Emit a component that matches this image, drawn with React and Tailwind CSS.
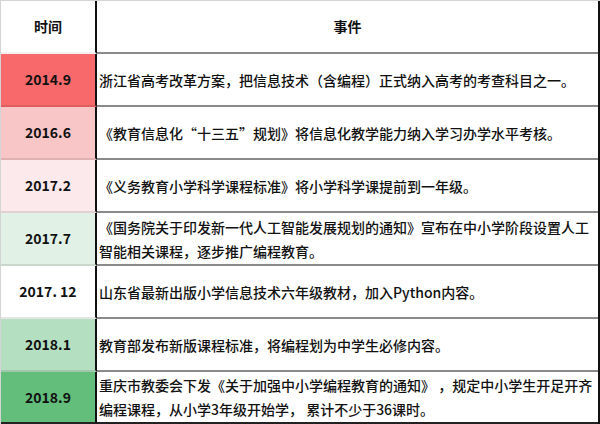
import React from 'react';

// linha do tempo: cor de fundo da coluna de datas segue a escala do Excel
const rows = [
  { date: '2014.9', bg: 'bg-[#f8696b]', lines: ['浙江省高考改革方案，把信息技术（含编程）正式纳入高考的考查科目之一。'] },
  { date: '2016.6', bg: 'bg-[#f9c6c8]', lines: ['《教育信息化“十三五”规划》将信息化教学能力纳入学习办学水平考核。'] },
  { date: '2017.2', bg: 'bg-[#fbe9ec]', lines: ['《义务教育小学科学课程标准》将小学科学课提前到一年级。'] },
  {
    date: '2017.7',
    bg: 'bg-[#e1f1e6]',
    lines: ['《国务院关于印发新一代人工智能发展规划的通知》宣布在中小学阶段设置人工', '智能相关课程，逐步推广编程教育。'],
  },
  { date: '2017. 12', bg: 'bg-white', lines: ['山东省最新出版小学信息技术六年级教材，加入Python内容。'] },
  { date: '2018.1', bg: 'bg-[#b4dfc1]', lines: ['教育部发布新版课程标准，将编程划为中学生必修内容。'] },
  {
    date: '2018.9',
    bg: 'bg-[#63be7b]',
    lines: ['重庆市教委会下发《关于加强中小学编程教育的通知》 ，规定中小学生开足开齐', '编程课程，从小学3年级开始学， 累计不少于36课时。'],
  },
];

const font = { fontFamily: '"Noto Sans CJK SC", "Noto Sans", sans-serif' };

const App = () => {
  return (
    <div
      className="w-[600px] h-[424px] bg-white border-t border-l border-[#d4d4d4] overflow-hidden text-[14px] text-[#111]"
      style={font}
    >
      <div className="flex flex-col h-full border-r-2 border-[#111]">
        {/* Cabeçalho */}
        <div className="flex h-[53px] shrink-0">
          <div className="w-[96px] border-r-2 border-[#111] border-b-2 border-b-black/5 flex items-center justify-center font-bold">
            时间
          </div>
          <div className="flex-1 border-b-2 border-[#8a8a8a] flex items-center justify-center font-bold">
            事件
          </div>
        </div>

        {rows.map((row, i) => {
          const last = i === rows.length - 1;
          return (
            <div key={row.date} className={`flex shrink-0 ${last ? 'h-[52px]' : 'h-[53px]'}`}>
              <div
                className={`w-[96px] ${row.bg} border-r-2 border-[#111] flex items-center justify-center font-bold ${
                  last ? 'border-b-2 border-b-[#222]' : 'border-b-2 border-b-black/10'
                }`}
              >
                {row.date}
              </div>
              <div
                className={`flex-1 flex flex-col justify-center pl-[2px] font-medium leading-[24px] ${
                  last ? 'border-b-2 border-[#222]' : 'border-b-2 border-[#8a8a8a]'
                }`}
              >
                {row.lines.map((line) => (
                  <span key={line} className="whitespace-pre">
                    {line}
                  </span>
                ))}
              </div>
            </div>
          );
        })}
      </div>
    </div>
  );
};

export default App;
